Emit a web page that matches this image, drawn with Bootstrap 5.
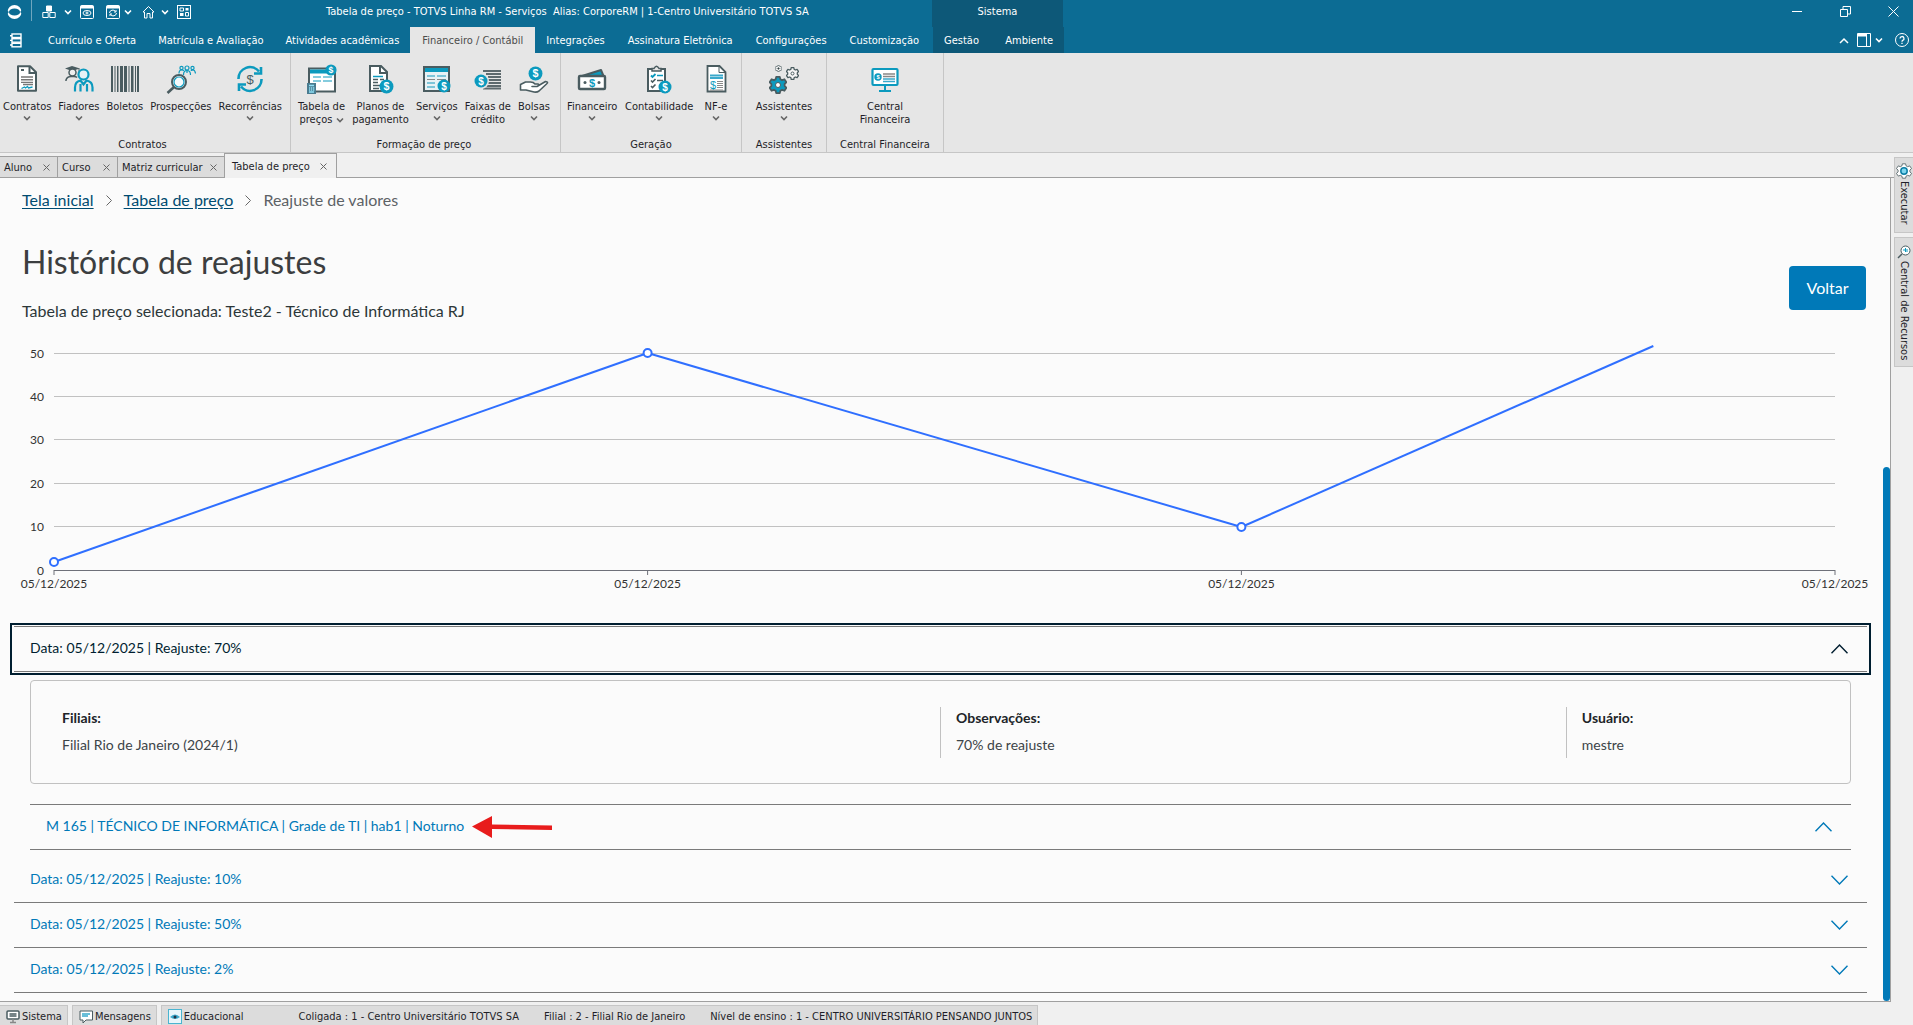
<!DOCTYPE html>
<html lang="pt-BR">
<head>
<meta charset="utf-8">
<meta name="viewport" content="width=device-width, initial-scale=1">
<title>TOTVS Linha RM - Serviços</title>
<link rel="stylesheet" href="https://cdn.jsdelivr.net/npm/bootstrap@5.3.0/dist/css/bootstrap.min.css">
<style>
:root{--ui:"DejaVu Sans Condensed","Noto Sans",sans-serif;--brand:#0c6c94;--blue:#0079b8;--ink:#4a5c60;--cyan:#0c9abe}
body{font-family:Lato,sans-serif;background:#f0f0f0;color:#2c3739;overflow:hidden}
button{color:inherit}
.shell-ui{font-family:var(--ui);font-size:11px;line-height:13px;color:#1e1e28}
.shell-ui a{color:inherit;text-decoration:none}
.shell-ui button{background:none;border:0;padding:0;font:inherit;color:inherit}
.topbar{background:var(--brand);color:#fff}
.titlebar{height:27px}
.quick{width:326px;padding-left:7px}
.quick .sep{width:1px;height:22px;background:#6fa6be;margin:0 10px 4px 9px}
.title-right{width:981px}
.wins{margin-right:-4px}
.menubar{height:26px}
.menubar .app-btn{width:37px;text-align:left;padding-left:9px}
.menubar a{display:flex;align-items:center;height:26px;padding:0 11px}
.menubar a.current{background:#e6e6e6;color:#4c4c4c;padding:0 12px}
.menubar a.current~a{padding:0 12px 0 11px}
.topbar .sys{background:#0d5878;width:131px}
.menubar .sys{margin-left:2px}
.win{width:48px;height:22px;display:inline-flex;align-items:center;justify-content:center}
.ribbon{background:#e6e6e6;border-bottom:1px solid #c6c6c6;height:100px}
.rgroup{border-right:1px solid #c6c6c6;padding:11px 6px 0;height:99px;display:flex;flex-direction:column;align-items:center}
.rgroup .caption{margin-top:auto;margin-bottom:1px}
.w-a{width:291px;padding-left:3px;padding-right:8px}.w-b{width:270px;padding-left:7px;padding-right:10px}.w-c{width:181px}.w-d{width:85px}.w-e{width:117px}
.rbtn{display:flex;flex-direction:column;align-items:center;text-align:center}
.rbtn .ico{width:30px;height:30px;margin-bottom:6px}
.rbtn .chev{margin-top:2px}
.doctabs{height:25px;border-bottom:1px solid #a0a0a0}
.dtab{display:flex;align-items:center;justify-content:space-between;height:21px;padding:0 7px 0 4px;background:#dcdcdc;border:1px solid #a0a0a0;border-left:0;border-bottom:0}
.dtab:last-child{background:#f0f0f0;border-left:1px solid #a0a0a0;padding:0 9px 0 7px;margin-bottom:-1px;height:25px;margin-left:-1px}
.dtab.t1{width:58px}.dtab.t2{width:60px}.dtab.t3{width:107px}.dtab.t4{width:113px}
.page{background:#fbfbfb;border-right:1px solid #a0a0a0;border-bottom:1px solid #a0a0a0;padding:10px 23px 0 14px;position:relative;overflow:hidden;margin-right:22px}
.thumb{position:absolute;right:0;top:289px;bottom:0;width:7px;background:var(--blue);border-radius:4px}
.crumbs{font-size:16px;line-height:24px;gap:12px}
.crumbs a{color:#004b70;text-underline-offset:2px}
.crumbs span{color:#5d6266}
h1.page-title{font-size:32px;font-weight:400;line-height:40px;color:#3c3e40;margin:30px 0 17px}
.sub{font-size:16px;line-height:24px;color:#2c3739;margin:0}
.btn-voltar{background:var(--blue);color:#fff;border:0;border-radius:4px;width:77px;height:44px;font-size:16px;padding:0;margin:0 1px 13px 0}
.chart{display:block;height:250px;width:100%;padding:0 32px 0 40px;overflow:visible;margin-top:17px;font-size:12px}
.acc{margin-top:36px;font-size:14px}
.ahead{border-bottom:1px solid #7a7a7a}
.ahead.open{border-top:1px solid #7a7a7a}
.ahead button{display:flex;width:100%;height:44px;align-items:center;justify-content:space-between;padding:0 19px 4px 16px;border:0;background:none;color:var(--blue);text-align:left}
.ahead button svg{margin-top:4px}
.ahead .focused{outline:2px solid #001e30;outline-offset:2px;color:#001e30}
.abody{padding:8px 16px}
.info{border:1px solid #c1c1c1;border-radius:4px;height:104px;padding:26px 16px 0 15px;display:flex;margin-bottom:20px}
.info>div{height:51px;padding:0 15px;line-height:22px;border-left:1px solid #c1c1c1}
.info>div:first-child{border:0;padding-left:16px}
.info p{margin:0 0 5px;color:#3c4448}
.info strong{display:block;margin-bottom:5px;color:#202428}
.info>.c1{width:50%}.info>.c2{width:35%}.info>.c3{width:15%}
.arrow{margin-left:8px}
.side{position:absolute;right:0;top:157px;width:19px}
.side button{display:flex;align-items:center;writing-mode:vertical-rl;width:19px;background:#dcdcdc;border:1px solid #c6c6c6;border-right:0;margin-bottom:4px;padding:5px 0 0;gap:2px}
.side .s1{height:76px}.side .s2{height:130px;gap:2px;padding-top:7px}
.statusbar{height:23px;padding-top:3px}
.sb{display:flex;align-items:center;height:20px;background:#dcdcdc;border:1px solid #c6c6c6;border-bottom:0;padding:2px 5px 0 6px;gap:1px;margin-right:4px}
.sb:first-child{border-left:0}
.sb .info-item{margin-left:54px}.sb .info-item+.info-item{margin-left:24px}
</style>
</head>
<body class="vh-100 d-flex flex-column">
<svg width="0" height="0" class="position-absolute">
 <defs>
  <symbol id="coin" viewBox="0 0 14 14"><circle cx="7" cy="7" r="6.500" fill="#0c9abe"/><text x="7" y="10.600" font-size="10" font-weight="700" font-family="Liberation Sans" fill="#fff" text-anchor="middle">$</text></symbol>
  <symbol id="down" viewBox="0 0 8 6"><path d="M1 1.500l3 3 3-3" fill="none" stroke="currentColor" stroke-width="1.600"/></symbol>
  <symbol id="cup" viewBox="0 0 17 10"><path d="M.5 9.200L8.500 1l8 8.200" fill="none" stroke="currentColor" stroke-width="1.400"/></symbol>
  <symbol id="cdown" viewBox="0 0 17 10"><path d="M.5.8L8.500 9l8-8.200" fill="none" stroke="currentColor" stroke-width="1.400"/></symbol>
  <symbol id="xx" viewBox="0 0 7 7"><path d="M.5.5l6 6M6.500.5l-6 6" stroke="#666" fill="none"/></symbol>
  <symbol id="gear" viewBox="-10 -10 20 20"><path d="M-2-9h4l.6 2.600 2 1 2.500-1 2.300 3.400-2 1.800v2.400l2 1.800-2.300 3.400-2.500-1-2 1L2 9h-4l-.6-2.600-2-1-2.500 1-2.300-3.400 2-1.800v-2.400l-2-1.800 2.300-3.400 2.500 1 2-1z" stroke-linejoin="round"/></symbol>
 </defs>
</svg>

<header class="topbar shell-ui text-white">
 <div class="titlebar d-flex">
  <div class="quick d-flex align-items-center flex-shrink-0 pb-1">
   <svg width="15" height="16" viewBox="0 0 15 16"><circle cx="7.500" cy="8" r="7" fill="#fff"/><ellipse cx="7.500" cy="8" rx="5.600" ry="3.600" fill="#0c6c94"/><path d="M0 6.500l2 1.500-2 2M15 6l-2 2 2 1.500" fill="#0c6c94"/></svg>
   <span class="sep"></span>
   <button aria-label="Módulos"><svg width="14" height="14" viewBox="0 0 14 14" stroke="#fff" fill="none"><path d="M4.500 1h5v5h-5z" fill="#fff"/><path d="M.8 7.500h5.400v5H.8zM7.800 7.500h5.400v5H7.800z"/></svg></button>
   <svg class="ms-2" width="8" height="6" ><use href="#down"/></svg>
   <button class="ms-2" aria-label="Visualizar"><svg width="14" height="14" viewBox="0 0 14 14" stroke="#fff" fill="none"><rect x=".5" y=".5" width="13" height="13" rx="1"/><path d="M1 1h12v2H1z" fill="#fff"/><ellipse cx="7" cy="8" rx="4" ry="2.500"/><circle cx="7" cy="8" r="1"/></svg></button>
   <button class="ms-2 ps-1" aria-label="Atualizar"><svg width="14" height="14" viewBox="0 0 14 14" stroke="#fff" fill="none"><rect x=".5" y=".5" width="13" height="13" rx="1"/><path d="M1 1h12v2H1z" fill="#fff"/><path d="M3.500 8a3.300 3.300 0 0 1 6-1.500M10.500 8a3.300 3.300 0 0 1-6 1.500M10 5v2H8M4 11V9h2"/></svg></button>
   <svg class="ms-1" width="8" height="6"><use href="#down"/></svg>
   <button class="ms-2" aria-label="Início"><svg width="17" height="14" viewBox="-2 0 17 14" stroke="#fff" fill="none"><path d="M1 7l5.500-5.500L12 7h-1.500v6h-2.500V8.500H5V13H2.500V7z"/></svg></button>
   <svg class="ms-1" width="8" height="6"><use href="#down"/></svg>
   <button class="ms-2" aria-label="Painel"><svg width="14" height="14" viewBox="0 0 14 14" stroke="#fff" fill="none"><rect x=".5" y=".5" width="13" height="13"/><path d="M3 3h3.500v3H3zM8.500 7.500h3V11h-3z"/><path d="M8.500 3h3v2.500h-3zM3 8h3.500v3H3z" fill="#fff" stroke="none"/></svg></button>
  </div>
  <div class="flex-grow-1 d-flex align-items-center pb-1">Tabela de preço - TOTVS Linha RM - Serviços &nbsp;Alias: CorporeRM | 1-Centro Universitário TOTVS SA</div>
  <div class="title-right flex-shrink-0 d-flex">
   <div class="sys d-flex align-items-center justify-content-center pb-1">Sistema</div>
   <div class="wins ms-auto d-flex">
    <button class="win" aria-label="Minimizar"><svg width="10" height="10"><path d="M0 5.500h10" stroke="#fff"/></svg></button>
    <button class="win" aria-label="Restaurar"><svg width="11" height="11" viewBox="0 0 11 11" fill="none" stroke="#fff"><path d="M.5 3.500h7v7h-7zM3 3.500V.5h7.500V8H7.500"/></svg></button>
    <button class="win" aria-label="Fechar"><svg width="11" height="11" viewBox="0 0 11 11" fill="none" stroke="#fff"><path d="M.5.5l10 10M10.500.5l-10 10"/></svg></button>
   </div>
  </div>
 </div>
 <nav class="menubar d-flex">
  <button class="app-btn flex-shrink-0" aria-label="Menu"><svg width="14" height="15" viewBox="0 0 14 15" fill="none" stroke="#fff" stroke-width="1.400"><rect x="3" y="1" width="9" height="3.500"/><rect x="3" y="5.700" width="9" height="3.500"/><rect x="3" y="10.300" width="9" height="3.500"/><path d="M1 2.700h2M1 7.400h2M1 12h2"/></svg></button>
  <a href="#">Currículo e Oferta</a><a href="#">Matrícula e Avaliação</a><a href="#">Atividades acadêmicas</a><a href="#" class="current">Financeiro / Contábil</a><a href="#">Integrações</a><a href="#">Assinatura Eletrônica</a><a href="#">Configurações</a><a href="#">Customização</a>
  <div class="sys d-flex"><a href="#">Gestão</a><a href="#" class="ms-auto">Ambiente</a></div>
  <div class="ms-auto d-flex align-items-center gap-1 pe-1">
   <button aria-label="Recolher"><svg width="10" height="7" viewBox="0 0 10 7"><path d="M1 6l4-4 4 4" fill="none" stroke="#fff" stroke-width="1.500"/></svg></button>
   <button class="ms-1" aria-label="Layout"><svg width="14" height="14" viewBox="0 0 14 14" fill="none" stroke="#fff"><path d="M.5.5h13v13H.5zM9.500 0v14"/><path d="M1 1h8v2H1z" fill="#fff"/></svg></button>
   <svg width="8" height="6"><use href="#down"/></svg>
   <button class="ms-2" aria-label="Ajuda"><svg width="14" height="14" viewBox="0 0 14 14" fill="none" stroke="#fff"><circle cx="7" cy="7" r="6.500"/><path d="M5 5.500a2 2 0 1 1 2.700 1.900q-.7.300-.7 1.300M7 9.700v1.300" stroke-width="1.300"/></svg></button>
  </div>
 </nav>
</header>

<section class="ribbon shell-ui d-flex flex-shrink-0">
 <div class="rgroup w-a"><div class="d-flex w-100 justify-content-between">
  <button class="rbtn"><svg class="ico" viewBox="0 0 30 30"><path d="M6 2.200h12l6 6v18.600H6z" fill="#fff" stroke="#4a5c60" stroke-width="2" stroke-linejoin="round"/><path d="M17.500 2.500V9h6.500" fill="none" stroke="#4a5c60" stroke-width="2"/><path d="M9 6h3" stroke="#4a5c60" stroke-width="2"/><path d="M9 13h12M9 15.700h12M9 18.400h12M11 20.500h10" stroke="#777" stroke-width="1.400"/><path d="M9.500 24.500l3-1.500 1 1 2-1.500 1 1.500 4-1" fill="none" stroke="#0c9abe" stroke-width="1.300"/></svg>Contratos<svg class="chev" width="8" height="6" color="#666"><use href="#down"/></svg></button>
  <button class="rbtn"><svg class="ico" viewBox="0 0 30 30" fill="none"><path d="M1 4.500l7-2.500 8 2.500-8 2.500z" fill="#4a5c60"/><path d="M15 4.500V9" stroke="#4a5c60"/><circle cx="8.500" cy="8.500" r="3.500" stroke="#4a5c60" stroke-width="1.500" fill="#eee"/><path d="M2 17v-1q1-3.500 5-3.500h3q2 0 3 1" stroke="#4a5c60" stroke-width="1.500"/><circle cx="19.500" cy="10.500" r="5" stroke="#0c9abe" stroke-width="2.200" fill="#e6f2f6"/><path d="M11 27.500v-4q0-6 5.500-7l3 4 3-4q6 1 6 7v4M16.500 20v7.500M23 20v7.500" stroke="#0c9abe" stroke-width="2.200"/></svg>Fiadores<svg class="chev" width="8" height="6" color="#666"><use href="#down"/></svg></button>
  <button class="rbtn"><svg class="ico" viewBox="0 0 30 30"><path d="M1 2h2v26H1zM4.500 2h1v26h-1zM7 2h1.500v26H7zM10 2h3v26h-3zM14 2h3v26h-3zM18.500 2h1v26h-1zM21 2h2.500v26H21zM25 2h1v26h-1zM27 2h2v26h-2z" fill="#4a5c60"/></svg>Boletos</button>
  <button class="rbtn"><svg class="ico" viewBox="0 0 30 30" fill="none"><circle cx="13" cy="18" r="7" fill="#f4fafc" stroke="#4a5c60" stroke-width="2"/><circle cx="13" cy="18" r="5" stroke="#0c9abe" stroke-width="1.200"/><path d="M8 23l-6.500 6" stroke="#4a5c60" stroke-width="2.600"/><g stroke="#0c9abe" stroke-width="1.200"><circle cx="15.500" cy="4" r="1.600"/><circle cx="21" cy="4" r="2"/><circle cx="26.500" cy="4" r="1.600"/><path d="M13 9.500q0-3.500 2.500-3.500t2 1M17.500 11q0-4.500 3.500-4.500t3.500 4.500M25 7q0-1 2-1t2.500 3.500M21 7v2"/></g></svg>Prospecções</button>
  <button class="rbtn"><svg class="ico" viewBox="0 0 30 30" fill="none"><g stroke="#0c9abe" stroke-width="2.600"><path d="M3.500 15A11.500 11.500 0 0 1 24 7.500M26.500 15A11.500 11.500 0 0 1 6 22.500"/><path d="M26 3v6.500h-7M4 27v-6.500h7"/></g><text x="15" y="19.500" font-size="13" fill="#4a5c60" text-anchor="middle" font-family="Liberation Sans">$</text></svg>Recorrências<svg class="chev" width="8" height="6" color="#666"><use href="#down"/></svg></button>
 </div><div class="caption">Contratos</div></div>

 <div class="rgroup w-b"><div class="d-flex w-100 justify-content-between">
  <button class="rbtn"><svg class="ico" viewBox="0 0 30 30"><rect x="2" y="4.500" width="26" height="23" fill="#fff" stroke="#4a5c60" stroke-width="2"/><path d="M3 5.500h24v4H3z" fill="#0c9abe"/><path d="M6 13h8M16 13h9M6 17h8M16 17h9" stroke="#0c9abe" stroke-width="1.200"/><rect x="0" y="19" width="9" height="11" fill="#4a7c90"/><path d="M2 21.500h5M2 24h1.300M4 24h1.300M6 24h1.300M2 26h1.300M4 26h1.300M6 26h1.300M2 28h5" stroke="#8fe0f6" stroke-width="1.300"/><use href="#coin" x="18" y="0" width="12" height="12"/></svg>Tabela de<br><span>preços <svg width="8" height="6" color="#666"><use href="#down"/></svg></span></button>
  <button class="rbtn"><svg class="ico" viewBox="0 0 30 30"><path d="M5 2h11l6 6v19H5z" fill="#fff" stroke="#4a5c60" stroke-width="2"/><path d="M15 2v7h7" fill="none" stroke="#4a5c60" stroke-width="2"/><path d="M8 12.500h10" stroke="#0c9abe" stroke-width="1.500"/><path d="M8 15.500h5M15 15.500h4M8 18.500h5M8 21.500h7M8 24.500h6" stroke="#4a5c60" stroke-width="1.500"/><use href="#coin" x="14" y="15" width="15" height="15"/></svg>Planos de<br>pagamento</button>
  <button class="rbtn"><svg class="ico" viewBox="0 0 30 30"><rect x="2" y="3" width="25" height="24" fill="#e8f2f5" stroke="#4a5c60" stroke-width="2"/><path d="M3 4h23v4H3z" fill="#0c9abe"/><path d="M5 12h8M15 12h9M5 19h8M5 23h8" stroke="#5ab7d0" stroke-width="1.300"/><path d="M5 15.500h8M15 15.500h9" stroke="#888"/><use href="#coin" x="15" y="15" width="14" height="14"/></svg>Serviços<svg class="chev" width="8" height="6" color="#666"><use href="#down"/></svg></button>
  <button class="rbtn"><svg class="ico" viewBox="0 0 30 30"><path d="M10 7h18M13 10h15M15 13h13M15 16h13M14 19h14M12 22h16M10 24.500h18" stroke="#5e6a6e" stroke-width="1.900"/><circle cx="8" cy="17" r="8" fill="#e6e6e6"/><use href="#coin" x="1" y="10" width="14" height="14"/></svg>Faixas de<br>crédito</button>
  <button class="rbtn"><svg class="ico" viewBox="0 0 30 30"><use href="#coin" x="9" y="2" width="15" height="15"/><path d="M1.500 20.500l5-2.500h5q3 0 4.500 2h3q2 1-1 2.500h-5 5l8.500-5q3.500.5 1 2.500L20 27q-2 1.500-5 1l-8-2H1.500z" fill="#fff" stroke="#4a5c60" stroke-width="1.600" stroke-linejoin="round"/></svg>Bolsas<svg class="chev" width="8" height="6" color="#666"><use href="#down"/></svg></button>
 </div><div class="caption">Formação de preço</div></div>

 <div class="rgroup w-c"><div class="d-flex w-100 justify-content-between">
  <button class="rbtn"><svg class="ico" viewBox="0 0 30 30"><path d="M5 12l19-6 2.500 6z" fill="#0c9abe" stroke="#4a5c60" stroke-width="2" stroke-linejoin="round"/><rect x="2" y="12" width="26" height="13" rx="1" fill="#fff" stroke="#4a5c60" stroke-width="2.400"/><circle cx="8" cy="18.500" r="1.500" fill="#4a5c60"/><circle cx="22" cy="18.500" r="1.500" fill="#4a5c60"/><text x="15" y="22.500" font-size="11" font-weight="700" font-family="Liberation Sans" fill="#0c9abe" text-anchor="middle">$</text></svg>Financeiro<svg class="chev" width="8" height="6" color="#666"><use href="#down"/></svg></button>
  <button class="rbtn"><svg class="ico" viewBox="0 0 30 30" fill="none"><rect x="4" y="5" width="17" height="22" fill="#fff" stroke="#4a5c60" stroke-width="2"/><path d="M8 7V4.500h2Q12.500 0 15 4.500h2V7z" fill="#e6e6e6" stroke="#4a5c60" stroke-width="1.500"/><path d="M7 11.500l1.500 1.500 3-3" stroke="#0c9abe" stroke-width="1.800"/><path d="M13 11.500h6" stroke="#0c9abe" stroke-width="1.500"/><path d="M7 16.500l1.500 1.500 3-3M7 22l1.500 1.500 3-3M13 16.500h6" stroke="#4a5c60" stroke-width="1.600"/><use href="#coin" x="14" y="16" width="14" height="14"/></svg>Contabilidade<svg class="chev" width="8" height="6" color="#666"><use href="#down"/></svg></button>
  <button class="rbtn me-1"><svg class="ico" viewBox="0 0 30 30" fill="none"><path d="M6.500 2h12l6 6v19.500h-18z" fill="#fff" stroke="#4a5c60" stroke-width="1.800"/><path d="M18 2v6.500h6.500" stroke="#4a5c60"/><path d="M9 11.500h13M9 14h13" stroke="#3aa9cc" stroke-width="1.800"/><path d="M16 17.500h6M16 19.500h6M16 21.500h6M16 23.500h6M9 26h13" stroke="#888"/><text x="12" y="25" font-size="11" font-family="Liberation Sans" fill="#0c9abe" text-anchor="middle">$</text></svg>NF-e<svg class="chev" width="8" height="6" color="#666"><use href="#down"/></svg></button>
 </div><div class="caption">Geração</div></div>

 <div class="rgroup w-d"><button class="rbtn"><svg class="ico" viewBox="0 0 30 30" stroke="#4a5c60"><use href="#gear" x="0" y="12" width="18" height="18" fill="#0c9abe" stroke-width="2"/><circle cx="9" cy="21" r="2.500" fill="#fff"/><use href="#gear" x="17" y="3" width="13" height="13" fill="#f6f6f6" stroke-width="2"/><circle cx="23.500" cy="9.500" r="1.500" fill="#fff"/><use href="#gear" x="6" y="1" width="7" height="7" fill="#f0f0f0" stroke-width="2"/><circle cx="9.500" cy="4.500" r=".7"/></svg>Assistentes<svg class="chev" width="8" height="6" color="#666"><use href="#down"/></svg></button><div class="caption">Assistentes</div></div>

 <div class="rgroup w-e"><button class="rbtn"><svg class="ico" viewBox="0 0 30 30" fill="none"><rect x="2.500" y="5" width="25" height="16" rx="1" fill="#fff" stroke="#0c9abe" stroke-width="2.200"/><path d="M15 21v5M9 27h12" stroke="#0c9abe" stroke-width="2"/><path d="M13 10h12M13 12.500h12" stroke="#888" stroke-width="1.300"/><path d="M13 15h12M13 17.500h12" stroke="#3aa9cc" stroke-width="1.300"/><use href="#coin" x="4" y="9" width="8" height="8"/></svg>Central<br>Financeira</button><div class="caption">Central Financeira</div></div>
</section>

<nav class="doctabs shell-ui d-flex align-items-end flex-shrink-0">
 <a href="#" class="dtab t1">Aluno<svg width="7" height="7"><use href="#xx"/></svg></a>
 <a href="#" class="dtab t2">Curso<svg width="7" height="7"><use href="#xx"/></svg></a>
 <a href="#" class="dtab t3">Matriz curricular<svg width="7" height="7"><use href="#xx"/></svg></a>
 <a href="#" class="dtab t4">Tabela de preço<svg width="7" height="7"><use href="#xx"/></svg></a>
</nav>

<main class="page flex-grow-1">
 <nav class="crumbs d-flex align-items-center ps-2">
  <a href="#">Tela inicial</a><svg width="6" height="11" viewBox="0 0 6 11" fill="none" stroke="#666"><path d="M.5.5l5 5-5 5"/></svg>
  <a href="#">Tabela de preço</a><svg width="6" height="11" viewBox="0 0 6 11" fill="none" stroke="#666"><path d="M.5.5l5 5-5 5"/></svg>
  <span>Reajuste de valores</span>
 </nav>
 <div class="d-flex justify-content-between align-items-end ps-2">
  <div><h1 class="page-title">Histórico de reajustes</h1><p class="sub">Tabela de preço selecionada: Teste2 - Técnico de Informática RJ</p></div>
  <button class="btn btn-voltar">Voltar</button>
 </div>

 <svg class="chart" role="img" aria-label="Histórico de reajustes">
  <g stroke="#c1c1c1"><line x1="0" x2="100%" y1="13.500" y2="13.500"/><line x1="0" x2="100%" y1="56.500" y2="56.500"/><line x1="0" x2="100%" y1="99.500" y2="99.500"/><line x1="0" x2="100%" y1="143.500" y2="143.500"/><line x1="0" x2="100%" y1="186.500" y2="186.500"/></g>
  <g stroke="#6e7079"><line x1="0" x2="100%" y1="230.500" y2="230.500"/><line x1="0" x2="0" y1="230" y2="235"/><line x1="33.330%" x2="33.330%" y1="230" y2="235"/><line x1="66.670%" x2="66.670%" y1="230" y2="235"/><line x1="100%" x2="100%" y1="230" y2="235"/></g>
  <g text-anchor="end" fill="#333"><text x="-10" y="18">50</text><text x="-10" y="61">40</text><text x="-10" y="104">30</text><text x="-10" y="148">20</text><text x="-10" y="191">10</text><text x="-10" y="235">0</text></g>
  <g text-anchor="middle" fill="#333"><text x="0" y="248">05/12/2025</text><text x="33.330%" y="248">05/12/2025</text><text x="66.670%" y="248">05/12/2025</text><text x="100%" y="248">05/12/2025</text></g>
  <g stroke="#2f6fff" stroke-width="2"><line x1="0" y1="222" x2="33.330%" y2="13"/><line x1="33.330%" y1="13" x2="66.670%" y2="187"/><line x1="66.670%" y1="187" x2="89.800%" y2="6"/>
  <g fill="#fff"><circle cx="0" cy="222" r="4"/><circle cx="33.330%" cy="13" r="4"/><circle cx="66.670%" cy="187" r="4"/></g></g>
 </svg>

 <div class="acc">
  <div class="ahead open"><button class="focused" aria-expanded="true">Data: 05/12/2025 | Reajuste: 70%<svg width="17" height="10"><use href="#cup"/></svg></button></div>
  <div class="abody">
   <div class="info">
    <div class="c1"><strong>Filiais:</strong><p>Filial Rio de Janeiro (2024/1)</p></div>
    <div class="c2"><strong>Observações:</strong><p>70% de reajuste</p></div>
    <div class="c3"><strong>Usuário:</strong><p>mestre</p></div>
   </div>
   <div class="ahead open"><button aria-expanded="true"><span class="d-flex align-items-center">M 165 | TÉCNICO DE INFORMÁTICA | Grade de TI | hab1 | Noturno<svg class="arrow" width="80" height="22" viewBox="0 0 80 22"><path d="M0 10.500L20 0v8.500l60 1v4.500l-60-1V22z" fill="#e81c1c"/></svg></span><svg width="17" height="10"><use href="#cup"/></svg></button></div>
  </div>
  <div class="ahead"><button aria-expanded="false">Data: 05/12/2025 | Reajuste: 10%<svg width="17" height="10"><use href="#cdown"/></svg></button></div>
  <div class="ahead"><button aria-expanded="false">Data: 05/12/2025 | Reajuste: 50%<svg width="17" height="10"><use href="#cdown"/></svg></button></div>
  <div class="ahead"><button aria-expanded="false">Data: 05/12/2025 | Reajuste: 2%<svg width="17" height="10"><use href="#cdown"/></svg></button></div>
 </div>
 <div class="thumb"></div>
</main>

<aside class="side shell-ui">
 <button class="s1"><svg width="16" height="16" viewBox="0 0 16 16"><use href="#gear" width="16" height="16" fill="#fff" stroke="#4a5c60"/><circle cx="8" cy="8" r="3.200" fill="#7fd6ee" stroke="#0c7fa6" stroke-width="1.500"/></svg>Executar</button>
 <button class="s2"><svg width="14" height="14" viewBox="0 0 14 14" fill="none"><circle cx="8.500" cy="5.500" r="4.500" fill="#fff" stroke="#4a5c60"/><path d="M5 9l-4 4" stroke="#4a5c60" stroke-width="1.500"/><path d="M7 4v2M8.500 3v4M10 4v3" stroke="#0c9abe"/></svg>Central de Recursos</button>
</aside>

<footer class="statusbar shell-ui d-flex flex-shrink-0">
 <div class="sb"><svg width="15" height="14" viewBox="0 0 15 14" fill="none"><rect x="1" y="1" width="12" height="8" rx="1" fill="#fff" stroke="#4a5c60" stroke-width="1.500"/><path d="M3.500 4h7M3.500 6h7" stroke="#4a5c60" stroke-width="1.500"/><path d="M7 9v4M4 12.500h6" stroke="#888" stroke-width="1.500"/></svg>Sistema</div>
 <div class="sb"><svg width="15" height="14" viewBox="0 0 15 14" fill="none"><path d="M1 1h12.500v9H7l-3 3v-3H1z" fill="#fff" stroke="#4a5c60"/><path d="M3 4h8M3 6h6" stroke="#3aa9cc" stroke-width="1.500"/></svg>Mensagens</div>
 <div class="sb"><svg width="15" height="15" viewBox="0 0 15 15" fill="none"><rect x=".5" y=".5" width="13" height="14" fill="#e8f6fa" stroke="#4ab4d0"/><path d="M2 8q5-5 10 0-5 4-10 0" fill="#3aa9cc"/><circle cx="7" cy="8" r="1.500" fill="#234"/></svg>Educacional<span class="info-item">Coligada : 1 - Centro Universitário TOTVS SA</span><span class="info-item">Filial : 2 - Filial Rio de Janeiro</span><span class="info-item">Nível de ensino : 1 - CENTRO UNIVERSITÁRIO PENSANDO JUNTOS</span></div>
</footer>
<script src="https://cdn.jsdelivr.net/npm/bootstrap@5.3.0/dist/js/bootstrap.bundle.min.js"></script>
</body>
</html>
